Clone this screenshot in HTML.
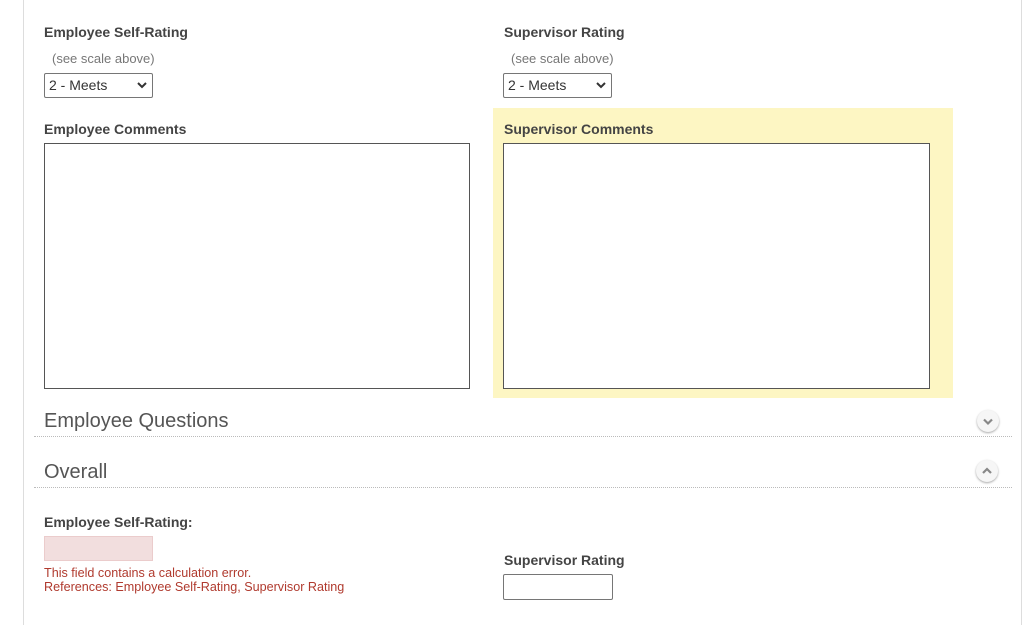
<!DOCTYPE html><html><head><style>
body{margin:0;width:1031px;height:625px;background:#fff;font-family:"Liberation Sans",sans-serif;position:relative;overflow:hidden}
.a{position:absolute}
.lb{font-size:14px;font-weight:bold;color:#444}
.sm{font-size:13px;color:#777}
.sel{position:absolute;width:109px;height:25px;border:1px solid #767676;border-radius:2px;box-sizing:border-box;font-size:14px;color:#333;padding:3px 4px;background:#fff}
.sel svg{position:absolute;right:5px;top:8px}
.ta{position:absolute;border:1px solid #555;background:#fff;box-sizing:border-box}
.h{font-size:20px;color:#555}
.line{position:absolute;left:34px;width:978px;border-top:1px dotted #bbb}
.btn{position:absolute;width:22px;height:22px;border-radius:50%;background:#f6f6f6;box-shadow:0 1px 2px rgba(0,0,0,.35)}
.err{font-size:12.6px;color:#b03a2e}
</style></head><body>
<div class="a" style="left:23px;top:0;width:1px;height:625px;background:#ddd"></div>
<div class="a" style="left:1021px;top:0;width:1px;height:625px;background:#ddd"></div>
<div class="a lb" style="left:44px;top:24px">Employee Self-Rating</div>
<div class="a sm" style="left:52px;top:51px">(see scale above)</div>
<div class="sel" style="left:44px;top:73px">2 - Meets<svg width="10" height="7"><path d="M1 1l4 4 4-4" stroke="#333" stroke-width="2" fill="none"/></svg></div>
<div class="a lb" style="left:504px;top:24px">Supervisor Rating</div>
<div class="a sm" style="left:511px;top:51px">(see scale above)</div>
<div class="sel" style="left:503px;top:73px">2 - Meets<svg width="10" height="7"><path d="M1 1l4 4 4-4" stroke="#333" stroke-width="2" fill="none"/></svg></div>
<div class="a lb" style="left:44px;top:121px">Employee Comments</div>
<div class="ta" style="left:44px;top:143px;width:426px;height:246px"></div>
<div class="a" style="left:493px;top:108px;width:460px;height:290px;background:#fdf6c3"></div>
<div class="a lb" style="left:504px;top:121px">Supervisor Comments</div>
<div class="ta" style="left:503px;top:143px;width:427px;height:246px"></div>
<div class="a h" style="left:44px;top:410px">Employee Questions</div>
<div class="line" style="top:436px"></div>
<div class="btn" style="left:977px;top:410px"><svg width="22" height="22"><path d="M7 9.5l4 4 4-4" stroke="#888" stroke-width="2.2" fill="none"/></svg></div>
<div class="a h" style="left:44px;top:461px">Overall</div>
<div class="line" style="top:487px"></div>
<div class="btn" style="left:976px;top:460px"><svg width="22" height="22"><path d="M7 13l4-4 4 4" stroke="#888" stroke-width="2.2" fill="none"/></svg></div>
<div class="a lb" style="left:44px;top:514px">Employee Self-Rating:</div>
<div class="a" style="left:44px;top:536px;width:109px;height:25px;background:#f2dede;border:1px solid #ebcccc;box-sizing:border-box"></div>
<div class="a err" style="left:44px;top:566px">This field contains a calculation error.</div>
<div class="a err" style="left:44px;top:580px">References: Employee Self-Rating, Supervisor Rating</div>
<div class="a lb" style="left:504px;top:552px">Supervisor Rating</div>
<div class="a" style="left:503px;top:574px;width:110px;height:26px;border:1px solid #767676;border-radius:2px;box-sizing:border-box"></div>
</body></html>
